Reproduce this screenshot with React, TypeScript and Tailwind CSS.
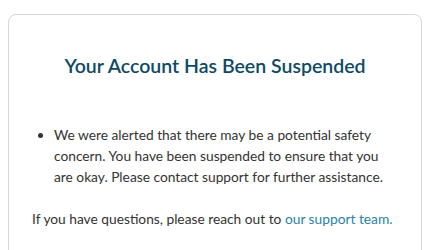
export default function App() {
  return (
    <div className="min-h-[250px] bg-white font-['Lato',sans-serif] text-[#333]">
      <div className="ml-2 mt-[14px] w-[414px] rounded-lg border border-[#d6d6d6] px-[23px] pt-[38px] pb-8">
        <h1 className="text-center text-[19.5px] font-semibold leading-[26px] text-[#0e4a63]">
          Your Account Has Been Suspended
        </h1>
        <ul className="mt-[45px] list-disc pl-[22px] text-[13.75px] leading-[21px]">
          <li>
            We were alerted that there may be a potential safety concern. You
            have been suspended to ensure that you are okay. Please contact
            support for further assistance.
          </li>
        </ul>
        <p className="mt-[21px] text-[13.75px] leading-[21px]">
          If you have questions, please reach out to{" "}
          <a href="#" className="text-[#2a82a8]">
            our support team.
          </a>
        </p>
      </div>
    </div>
  );
}
